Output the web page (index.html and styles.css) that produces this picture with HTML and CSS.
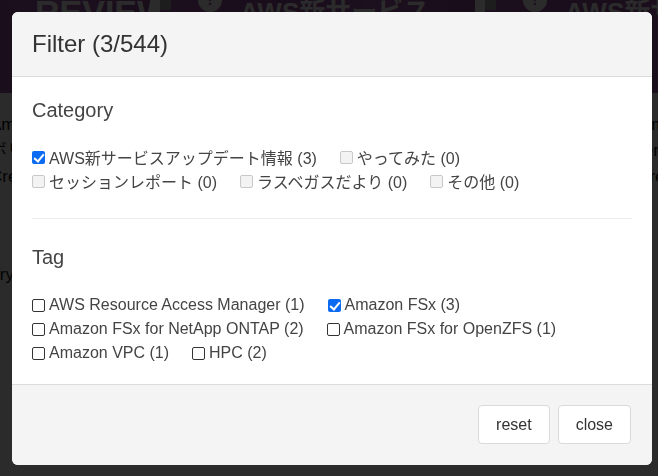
FILE: index.html
```html
<!DOCTYPE html>
<html lang="ja">
<head>
<meta charset="utf-8">
<title>Filter</title>
<link rel="stylesheet" href="styles.css">
</head>
<body>
<div class="page">
  <div class="card">
    <div class="thumb"><span class="thumb-text">REVIEW<br>SESSION</span></div>
    <p class="card-text first">Amazon FSx for NetApp ONTAP</p>
    <p class="card-text">ボリュームをマウントしてみたイメージ</p>
    <p class="card-text">Create a new volume and a rule</p>
    <p class="card-text gap">Try this</p>
  </div>
  <div class="card">
    <div class="thumb"><span class="badge"></span><span class="bang">!</span><span class="thumb-text big">AWS新サービス</span></div>
    <p class="card-text first">Amazon FSx for OpenZFS</p>
  </div>
  <div class="card">
    <div class="thumb"><span class="badge"></span><span class="bang">!</span><span class="thumb-text big">AWS新サービス</span></div>
    <p class="card-text first">Amazon</p>
    <p class="card-text">Ontap</p>
    <p class="card-text">are</p>
  </div>
</div>

<div class="overlay">
  <div class="modal">
    <div class="modal-header">
      <h2 class="modal-title">Filter (3/544)</h2>
    </div>
    <div class="modal-body">
      <h3 class="section-title">Category</h3>
      <div class="options">
        <label class="option"><span class="box checked"></span>AWS新サービスアップデート情報 (3)</label>
        <label class="option"><span class="box disabled"></span>やってみた (0)</label>
        <label class="option"><span class="box disabled"></span>セッションレポート (0)</label>
        <label class="option"><span class="box disabled"></span>ラスベガスだより (0)</label>
        <label class="option"><span class="box disabled"></span>その他 (0)</label>
      </div>
      <hr class="divider">
      <h3 class="section-title tag-title">Tag</h3>
      <div class="options tag-options">
        <label class="option"><span class="box"></span>AWS Resource Access Manager (1)</label>
        <label class="option"><span class="box checked"></span>Amazon FSx (3)</label>
        <label class="option"><span class="box"></span>Amazon FSx for NetApp ONTAP (2)</label>
        <label class="option"><span class="box"></span>Amazon FSx for OpenZFS (1)</label>
        <label class="option"><span class="box"></span>Amazon VPC (1)</label>
        <label class="option"><span class="box"></span>HPC (2)</label>
      </div>
    </div>
    <div class="modal-footer">
      <button class="btn">reset</button>
      <button class="btn">close</button>
    </div>
  </div>
</div>
</body>
</html>
```

FILE: styles.css
```css
* { box-sizing: border-box; }
html, body { margin: 0; padding: 0; }
body {
  width: 658px;
  height: 476px;
  overflow: hidden;
  background: #fff;
  font-family: "Liberation Sans", "Noto Sans CJK JP", sans-serif;
}

/* background page */
.page {
  display: grid;
  grid-template-columns: 315px 315px 315px;
  column-gap: 10px;
  margin-left: -165px;
}
.card { display: flex; flex-direction: column; overflow: hidden; }
.thumb {
  position: relative;
  height: 93px;
  background: linear-gradient(90deg, #a85ab0 0%, #96509e 40%, #a95fb2 70%, #924c9c 100%);
  overflow: hidden;
}
.thumb-text {
  display: block;
  color: #fff;
  font-weight: bold;
  font-size: 34px;
  line-height: 36px;
  margin: -6px 0 0 200px;
}
.thumb-text.big { margin: -6px 0 0 80px; font-size: 26px; }
.badge {
  position: absolute;
  left: -5px; top: 0;
  width: 16px; height: 10px;
  background: #aaa;
}
.bang {
  position: absolute;
  left: 38px; top: -12px;
  width: 24px; height: 24px;
  border-radius: 50%;
  background: #fff;
  color: #a85ab0;
  font-weight: bold;
  text-align: center;
  font-size: 16px;
  line-height: 24px;
}
.card-text {
  margin: 6px 0 0 155px;
  font-size: 17px;
  line-height: 20px;
  color: #111;
  white-space: nowrap;
}
.card-text.first { margin-top: 22px; }
.card-text.gap { margin-top: 78px; }

/* overlay + modal */
.overlay {
  position: fixed;
  inset: 0;
  background: rgba(0, 0, 0, 0.83);
  padding: 12px 6px 11px 12px;
  display: flex;
  align-items: flex-start;
}
.modal {
  width: 640px;
  height: 453px;
  background: #fff;
  border-radius: 6px;
  overflow: hidden;
  display: flex;
  flex-direction: column;
  color: #444;
}
.modal-header {
  height: 65px;
  background: #f4f4f4;
  border-bottom: 1px solid #dcdcdc;
  display: flex;
  align-items: center;
  padding: 0 20px;
}
.modal-title {
  margin: 0;
  font-family: "Liberation Sans", sans-serif;
  font-weight: 400;
  font-size: 24px;
  color: #333;
}
.modal-body {
  flex: 1;
  padding: 21px 20px 0;
}
.section-title {
  margin: 0;
  font-weight: 400;
  font-size: 20px;
  line-height: 24px;
  color: #444;
}
.options {
  display: flex;
  flex-wrap: wrap;
  margin-top: 23px;
}
.tag-options { margin-top: 24px; }
.option {
  display: flex;
  align-items: center;
  height: 24px;
  margin-right: 23px;
  font-size: 16px;
  color: #444;
  white-space: nowrap;
}
.box {
  width: 13px;
  height: 13px;
  border: 1px solid #333;
  border-radius: 2px;
  margin-right: 4px;
  background: #fff;
  position: relative;
  flex: none;
}
.box.disabled {
  border-color: #c8c8c8;
  background: #f3f3f3;
}
.box.checked {
  border: none;
  background: #0b6cf2;
  border-radius: 2px;
}
.box.checked::after {
  content: "";
  position: absolute;
  left: 4px;
  top: 1px;
  width: 4px;
  height: 8px;
  border: solid #fff;
  border-width: 0 2px 2px 0;
  transform: rotate(40deg);
}
.divider {
  border: 0;
  border-top: 1px solid #ececec;
  margin: 25px 0 0;
}
.tag-title { margin-top: 26px; }
.modal-footer {
  height: 81px;
  background: #f4f4f4;
  border-top: 1px solid #dcdcdc;
  display: flex;
  justify-content: flex-end;
  align-items: flex-start;
  gap: 8px;
  padding: 20px 21px 0 0;
}
.btn {
  height: 39px;
  padding: 0 17px;
  background: #fff;
  border: 1px solid #dadada;
  border-radius: 4px;
  font-family: "Liberation Sans", sans-serif;
  font-size: 16px;
  color: #333;
}
```
